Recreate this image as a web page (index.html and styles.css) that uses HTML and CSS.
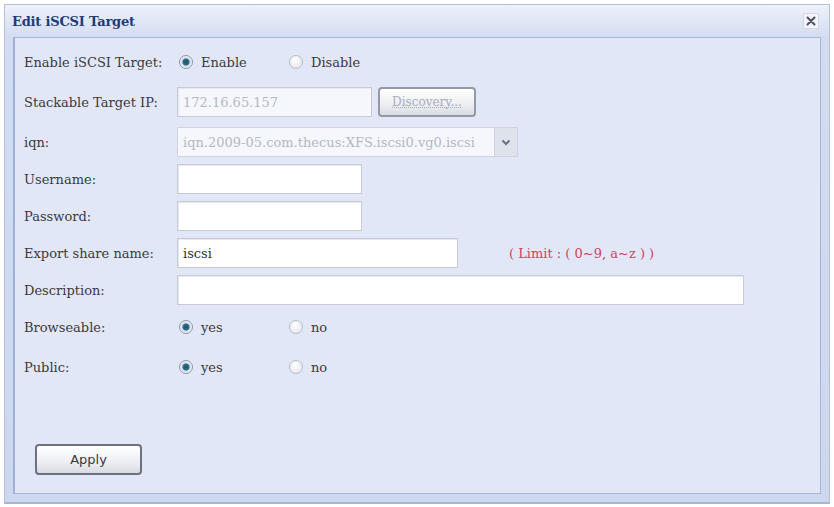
FILE: index.html
```html
<!DOCTYPE html>
<html>
  <head>
    <title>Edit iSCSI Target</title>
    <link rel="stylesheet" href="styles.css">
  </head>
  <body>
    <div class="window">
      <div class="titlebar">
        <span class="title">Edit iSCSI Target</span>
        <span class="close">
          <svg width="10" height="10" viewBox="0 0 10 10"><path d="M1.5 1.5 L8.5 8.5 M8.5 1.5 L1.5 8.5" stroke="#4a5060" stroke-width="2" stroke-linecap="round"/></svg>
        </span>
      </div>
      <div class="panel">
        <div class="form">
          <div class="label">Enable iSCSI Target:</div>
          <div class="field">
            <span class="option"><span class="radio checked"></span>Enable</span>
            <span class="option"><span class="radio"></span>Disable</span>
          </div>

          <div class="label">Stackable Target IP:</div>
          <div class="field">
            <span class="input disabled ip">172.16.65.157</span>
            <span class="button small">Discovery...</span>
          </div>

          <div class="label">iqn:</div>
          <div class="field">
            <span class="select">
              <span class="select-text">iqn.2009-05.com.thecus:XFS.iscsi0.vg0.iscsi</span>
              <span class="select-arrow">
                <svg width="10" height="7" viewBox="0 0 10 7"><path d="M1.5 1.5 L5 5 L8.5 1.5" stroke="#6a7080" stroke-width="2" fill="none"/></svg>
              </span>
            </span>
          </div>

          <div class="label">Username:</div>
          <div class="field"><span class="input short"></span></div>

          <div class="label">Password:</div>
          <div class="field"><span class="input short"></span></div>

          <div class="label">Export share name:</div>
          <div class="field">
            <span class="input medium">iscsi</span>
            <span class="limit">( Limit : ( 0~9, a~z ) )</span>
          </div>

          <div class="label">Description:</div>
          <div class="field"><span class="input long"></span></div>

          <div class="label">Browseable:</div>
          <div class="field">
            <span class="option"><span class="radio checked"></span>yes</span>
            <span class="option"><span class="radio"></span>no</span>
          </div>

          <div class="label">Public:</div>
          <div class="field">
            <span class="option"><span class="radio checked"></span>yes</span>
            <span class="option"><span class="radio"></span>no</span>
          </div>
        </div>
        <div class="actions">
          <span class="button apply">Apply</span>
        </div>
      </div>
    </div>
  </body>
</html>
```

FILE: styles.css
```css
body {
  margin: 0;
  padding: 4px;
  background-color: #ffffff;
  font-family: "DejaVu Serif", "Liberation Serif", serif;
  font-size: 13px;
  color: #3a3a3a;
}

.window {
  width: 824px;
  height: 497px;
  border: 1px solid #b3c1dc;
  border-bottom: 2px solid #a9b6cf;
  background: linear-gradient(#eef1f9, #d3dcf0 32px, #cdd7ee);
  display: flex;
  flex-direction: column;
}

.titlebar {
  height: 32px;
  display: flex;
  align-items: center;
  justify-content: space-between;
  padding: 0 10px 0 7px;
}

.title {
  font-weight: bold;
  font-size: 13px;
  color: #1e3c78;
  letter-spacing: -0.2px;
}

.close {
  width: 14px;
  height: 14px;
  background-color: #f2f4fa;
  border: 1px solid #d2d8e6;
  display: flex;
  align-items: center;
  justify-content: center;
}

.panel {
  flex: 1;
  margin: 0 8px 8px 8px;
  border: 1px solid #a3b5d8;
  border-left: 2px solid #9fb1d6;
  background-color: #e2e7f7;
  padding: 6px 0 0 9px;
}

.form {
  display: grid;
  grid-template-columns: 153px 1fr;
  grid-template-rows: 36px 44px 36px 38px 36px 38px 36px 38px 42px;
}

.label {
  display: flex;
  align-items: center;
}

.field {
  display: flex;
  align-items: center;
}

.option {
  display: flex;
  align-items: center;
  width: 108px;
  margin-left: 2px;
}

.radio {
  width: 12px;
  height: 12px;
  border-radius: 50%;
  border: 1px solid #b8bcc6;
  background: radial-gradient(circle at 40% 35%, #ffffff, #dfe2ea);
  margin-right: 8px;
  box-sizing: content-box;
}

.radio.checked {
  border-color: #8a96a8;
  background: radial-gradient(circle, #1f4f66 0, #2f6f88 3px, #cfd6e2 4px, #f4f6fa 6px);
}

.input {
  display: flex;
  align-items: center;
  box-sizing: border-box;
  height: 30px;
  background-color: #ffffff;
  border: 1px solid #c6cbd6;
  box-shadow: inset 1px 1px 1px #e6e8ee;
  padding-left: 5px;
  color: #333;
}

.input.disabled {
  background-color: #f5f7fc;
  color: #b4b8c4;
}

.ip {
  width: 195px;
}

.short {
  width: 185px;
}

.medium {
  width: 281px;
}

.long {
  width: 567px;
}

.button {
  display: flex;
  align-items: center;
  justify-content: center;
  box-sizing: border-box;
  border: 2px solid #6e7280;
  border-radius: 4px;
  background: linear-gradient(#ffffff, #eceef2 60%, #d8dbe2);
  font-family: "DejaVu Sans", "Liberation Sans", sans-serif;
  color: #3a3a3a;
}

.button.small {
  width: 98px;
  height: 30px;
  margin-left: 6px;
  border-color: #9499a6;
  color: #a8adba;
  font-family: "DejaVu Serif", serif;
  font-size: 12px;
  text-decoration: underline dotted;
}

.select {
  display: flex;
  width: 341px;
  height: 30px;
  box-sizing: border-box;
  border: 1px solid #d0d4de;
  background-color: #f5f7fc;
}

.select-text {
  flex: 1;
  display: flex;
  align-items: center;
  padding-left: 5px;
  color: #b4b8c4;
  overflow: hidden;
  white-space: nowrap;
}

.select-arrow {
  width: 22px;
  display: flex;
  align-items: center;
  justify-content: center;
  background-color: #dde2ec;
  border-left: 1px solid #cfd4de;
}

.limit {
  margin-left: 51px;
  color: #d4405a;
}

.actions {
  margin-top: 56px;
  padding-left: 11px;
}

.button.apply {
  width: 107px;
  height: 31px;
  font-size: 13px;
}
```
